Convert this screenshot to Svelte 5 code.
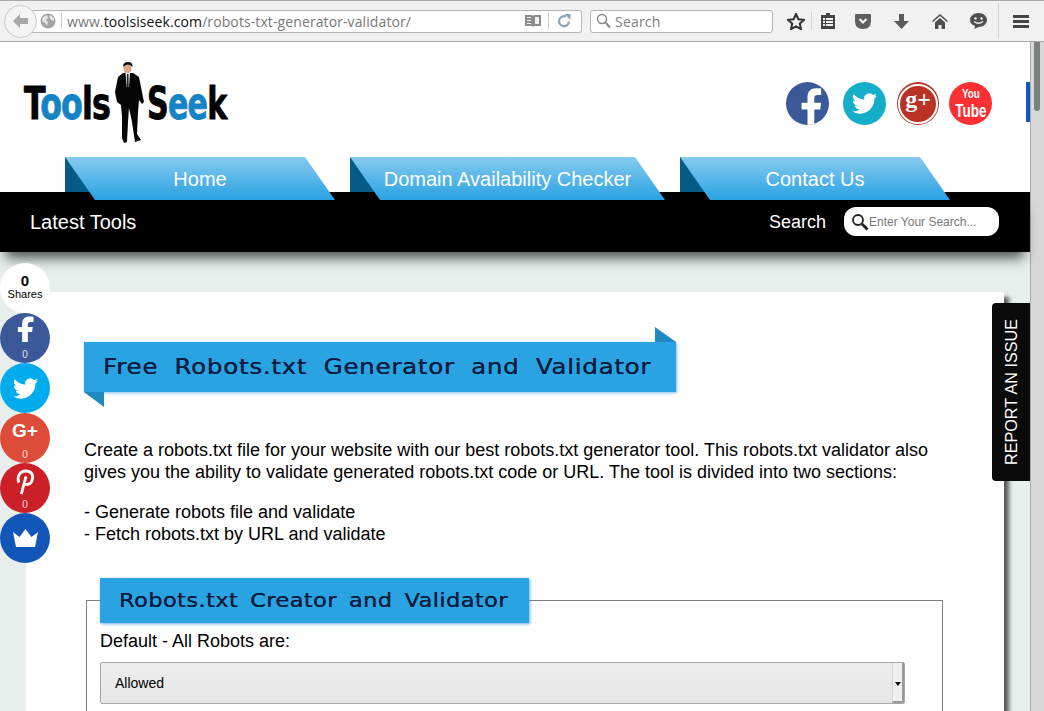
<script>
  const tabs = [
    { label: 'Home', width: 270 },
    { label: 'Domain Availability Checker', width: 315 },
    { label: 'Contact Us', width: 270 }
  ];
  const twitterPath = 'M23.953 4.57a10 10 0 01-2.825.775 4.958 4.958 0 002.163-2.723c-.951.555-2.005.959-3.127 1.184a4.92 4.92 0 00-8.384 4.482C7.69 8.095 4.067 6.13 1.64 3.162a4.822 4.822 0 00-.666 2.475c0 1.71.87 3.213 2.188 4.096a4.904 4.904 0 01-2.228-.616v.06a4.923 4.923 0 003.946 4.827 4.996 4.996 0 01-2.212.085 4.936 4.936 0 004.604 3.417 9.867 9.867 0 01-6.102 2.105c-.39 0-.779-.023-1.17-.067a13.995 13.995 0 007.557 2.209c9.053 0 13.998-7.496 13.998-13.985 0-.21 0-.42-.015-.63A9.935 9.935 0 0024 4.59z';
  const fPath = 'M14 24V13.5h3.5l.5-4h-4V7c0-1.2.3-2 2-2h2V1.2C17.6 1.1 16.4 1 15 1c-3 0-5 1.8-5 5.1v3.4H6.5v4H10V24z';
</script>

<div class="browser">
  <div class="toolbar">
    <div class="back">
      <svg width="20" height="20" viewBox="0 0 20 20"><path d="M2 10l7-7v4h8v6H9v4z" fill="#a8a8a8"/></svg>
    </div>
    <div class="urlbar">
      <svg width="16" height="16" viewBox="0 0 16 16"><circle cx="8" cy="8" r="7.5" fill="#a3a3a3"/><path d="M3 4l4-2 1 3-2 2 2 2-1 4-2-3-3-2zM10 2l4 3v3l-3-1-2-3z" fill="#e4e4e4"/></svg>
      <span class="divider"></span>
      <span class="url">www.<b>toolsiseek.com</b>/robots-txt-generator-validator/</span>
      <svg class="reader" width="16" height="14" viewBox="0 0 16 14"><path d="M0 1h7l1 1 1-1h7v11H9l-1 1-1-1H0z" fill="#8c8c8c"/><path d="M2 3h4v1H2zM2 6h4v1H2zM2 9h4v1H2zM10 3h4v7h-4z" fill="#f2f2f2"/></svg>
      <span class="divider mid"></span>
      <svg class="reload" width="16" height="16" viewBox="0 0 16 16"><path d="M13 8.5A5 5 0 1 1 10 3.6" fill="none" stroke="#8ea2b0" stroke-width="2.2"/><path d="M8.5 1h6v6z" fill="#8ea2b0"/></svg>
    </div>
    <div class="searchbar">
      <svg width="15" height="16" viewBox="0 0 15 16"><circle cx="6" cy="6" r="4.5" fill="none" stroke="#8a8a8a" stroke-width="1.5"/><path d="M9.5 9.5l4.5 5" stroke="#8a8a8a" stroke-width="2"/></svg>
      <span>Search</span>
    </div>
    <div class="tool narrow star">
      <svg width="18" height="17" viewBox="0 0 18 17"><path d="M9 1l2.4 5.2 5.6.6-4.2 3.8 1.2 5.5L9 13.3l-5 2.8 1.2-5.5L1 6.8l5.6-.6z" fill="none" stroke="#2f2f2f" stroke-width="2"/></svg>
    </div>
    <span class="tool-line"></span>
    <div class="tool narrow">
      <svg width="14" height="16" viewBox="0 0 14 16"><path d="M5 0h4v2h5v14H0V2h5z" fill="#444"/><path d="M2 5h2v2H2zM5 5h7v2H5zM2 8h2v2H2zM5 8h7v2H5zM2 11h2v2H2zM5 11h7v2H5z" fill="#f0f0f0"/></svg>
    </div>
    <div class="tool first">
      <svg width="16" height="15" viewBox="0 0 16 15"><path d="M1 0h14q1 0 1 1v6q0 8-8 8T0 7V1q0-1 1-1z" fill="#5e5e5e"/><path d="M4.5 5L8 8.5 11.5 5" fill="none" stroke="#f0f0f0" stroke-width="2.2"/></svg>
    </div>
    <div class="tool">
      <svg width="15" height="15" viewBox="0 0 15 15"><path d="M5 0h5v7h5l-7.5 8L0 7h5z" fill="#5a5a5a"/></svg>
    </div>
    <div class="tool first">
      <svg width="16" height="15" viewBox="0 0 16 15"><path d="M8 0l8 7-1 1-7-6-7 6-1-1zM3 8.5l5-4.5 5 4.5V15H9.5v-4h-3v4H3z" fill="#4f4f4f"/></svg>
    </div>
    <div class="tool">
      <svg width="17" height="16" viewBox="0 0 17 16"><path d="M8.5 0C13 0 17 2.8 17 7s-4 7-8.5 7l-4 2 .5-3C2 12 0 10 0 7c0-4.2 4-7 8.5-7z" fill="#505050"/><circle cx="5.5" cy="5.5" r="1.2" fill="#f0f0f0"/><circle cx="11.5" cy="5.5" r="1.2" fill="#f0f0f0"/><path d="M4 8.5q4.5 3.5 9 0" fill="none" stroke="#f0f0f0" stroke-width="1.3"/></svg>
    </div>
    <span class="tool-line tall"></span>
    <div class="menu"><i></i><i></i><i></i></div>
  </div>

  <div class="viewport">
    <div class="page">
      <header class="top">
        <div class="logo">
          <span class="word">T<em>oo</em>ls</span>
          <svg class="man" width="34" height="82" viewBox="0 0 34 82">
            <path d="M12 11L22 11 28 15 31 30 33 40 31 42 28 38 27 50 26 72 30 78 24 80 21 60 18 46 17 60 16 80 13 81 11 76 11 55 10 43 6 40 4 30 7 15z" fill="#050505"/>
            <ellipse cx="16.5" cy="6.5" rx="4" ry="5" fill="#d9a98c"/>
            <path d="M12 5q0-5 5-5t4.500 5q-2-2.500-4.500-2.500T12 5z" fill="#111"/>
            <path d="M14.5 11h4.500l-1 14h-2.500z" fill="#e8e8e8"/>
            <path d="M16 12h1.400l.3 13h-2z" fill="#222"/>
          </svg>
          <span class="word seek">S<em>ee</em>k</span>
        </div>
        <div class="social">
          <span class="soc fb"><svg width="43" height="43" viewBox="0 0 24 24"><path d={fPath} transform="translate(2.5 2.5) scale(.95)" fill="#fff"/></svg></span>
          <span class="soc tw"><svg width="25" height="25" viewBox="0 0 24 24"><path d={twitterPath} fill="#fff"/></svg></span>
          <span class="soc gp"><span class="ring">g+</span></span>
          <span class="soc yt"><span class="you">You</span><span class="tube">Tube</span></span>
        </div>
        <span class="edge"></span>
      </header>

      <nav class="tabs">
        {#each tabs as tab}
          <a class="tab" href="#top" style:width="{tab.width}px"><span>{tab.label}</span></a>
        {/each}
      </nav>

      <div class="bar">
        <span class="latest">Latest Tools</span>
        <span class="bar-search">Search</span>
        <div class="find">
          <svg width="18" height="18" viewBox="0 0 18 18"><circle cx="7" cy="7" r="5" fill="#fff" stroke="#222" stroke-width="1.8"/><path d="M11 11l5.5 5.5" stroke="#222" stroke-width="2.8"/></svg>
          <span>Enter Your Search...</span>
        </div>
      </div>

      <main class="content">
        <article class="card">
          <div class="banner"><h1><span>Free Robots.txt Generator and Validator</span></h1></div>
          <p class="intro">Create a robots.txt file for your website with our best robots.txt generator tool. This robots.txt validator also gives you the ability to validate generated robots.txt code or URL. The tool is divided into two sections:</p>
          <p class="list">- Generate robots file and validate<br>- Fetch robots.txt by URL and validate</p>
          <fieldset>
            <legend><span>Robots.txt Creator and Validator</span></legend>
            <div class="label">Default - All Robots are:</div>
            <div class="select"><span>Allowed</span><div class="arrow"></div></div>
          </fieldset>
        </article>
      </main>

      <aside class="share">
        <div class="circle count"><b>0</b><span>Shares</span></div>
        <div class="circle s-fb"><svg width="26" height="34" viewBox="5 0 14 24"><path d="M14 19V12h3l.5-3.5H14V7c0-1.2.3-2 2-2h2V1.2C17.6 1.1 16.4 1 15 1c-3 0-5 1.8-5 5.1v2.4H7V12h3v7z" fill="#fff"/></svg><small>0</small></div>
        <div class="circle s-tw"><svg width="25" height="25" viewBox="0 0 24 24"><path d={twitterPath} fill="#fff"/></svg></div>
        <div class="circle s-gp"><strong>G+</strong><small>0</small></div>
        <div class="circle s-pi"><svg width="22" height="30" viewBox="3 1 18 22"><path d="M7 12.5C5 7.5 8 3 12.8 3 17 3 19 6 18 10c-1 4-5 5-6.5 3M12.8 7.5L9 22" fill="none" stroke="#fff" stroke-width="2.3"/></svg><small>0</small></div>
        <div class="circle s-cr"><svg width="25" height="18" viewBox="0 0 25 18"><path d="M0 3l6.5 5L12.5 0l6 8L25 3l-3 15H3z" fill="#fff"/></svg></div>
      </aside>

      <div class="report"><span>REPORT AN ISSUE</span></div>
    </div>
    <div class="scrollbar"><div class="thumb"></div></div>
  </div>
</div>

<style>
  :global(body) {
    overflow: hidden;
  }
  .browser {
    width: 1044px;
    height: 711px;
    overflow: hidden;
    display: flex;
    flex-direction: column;
    font-family: "Liberation Sans", Arial, sans-serif;
    color: #000;
    background: #fff;
  }

  /* browser toolbar */
  .toolbar {
    height: 40px;
    flex: none;
    display: flex;
    align-items: center;
    background: #f1f1f1;
    border-top: 1px solid #a9a9a9;
    border-bottom: 1px solid #a9a9a9;
  }
  .toolbar > * {
    flex: none;
  }
  .back {
    width: 31px;
    height: 31px;
    margin-left: 4px;
    border: 1px solid #c9c9c9;
    border-radius: 50%;
    background: #f4f4f4;
    display: flex;
    align-items: center;
    justify-content: center;
    position: relative;
    z-index: 1;
  }
  .urlbar {
    width: 541px;
    height: 21px;
    margin-left: -7px;
    padding-left: 10px;
    display: flex;
    align-items: center;
    background: #fff;
    border: 1px solid #b4b4b4;
    border-left: none;
    border-radius: 0 3px 3px 0;
    font-family: "Open Sans", sans-serif;
    font-size: 14px;
    color: #777;
  }
  .divider {
    width: 1px;
    height: 16px;
    margin: 0 5px;
    background: #ccc;
  }
  .divider.mid {
    margin: 0 7px;
  }
  .url {
    flex: 1;
    white-space: nowrap;
    letter-spacing: 0.1px;
  }
  .url b {
    font-weight: 400;
    color: #111;
  }
  .reload {
    margin-right: 9px;
  }
  .searchbar {
    width: 176px;
    height: 21px;
    margin-left: 8px;
    padding-left: 5px;
    display: flex;
    align-items: center;
    gap: 4px;
    background: #fff;
    border: 1px solid #b4b4b4;
    border-radius: 3px;
    font-family: "Open Sans", sans-serif;
    font-size: 14px;
    letter-spacing: 0.2px;
    color: #7d7d7d;
  }
  .tool {
    width: 38px;
    display: flex;
    justify-content: center;
  }
  .tool.narrow {
    width: 31px;
  }
  .tool.star {
    margin-left: 7px;
  }
  .tool.first {
    margin-left: 1px;
  }
  .tool-line {
    width: 1px;
    height: 18px;
    background: #d3d3d3;
  }
  .tool-line.tall {
    height: 36px;
    margin-left: 1px;
  }
  .menu {
    width: 44px;
    display: flex;
    flex-direction: column;
    align-items: center;
    gap: 2px;
  }
  .menu i {
    width: 16px;
    height: 3px;
    background: #444;
  }

  .viewport {
    flex: 1;
    display: flex;
    min-height: 0;
  }
  .page {
    width: 1030px;
    flex: none;
    position: relative;
    background: #e8eeec;
  }
  .scrollbar {
    flex: 1;
    background: #d8d8d8;
    border-left: 1px solid #a9a9a9;
  }
  .thumb {
    width: 6px;
    height: 69px;
    margin-left: 3px;
    border-radius: 0 0 3px 3px;
    background: #7d8080;
  }

  /* site header */
  .top {
    height: 115px;
    display: flex;
    background: #fff;
    position: relative;
  }
  .logo {
    margin: 20px 0 0 24px;
    height: 82px;
    display: flex;
    align-items: center;
  }
  .word {
    width: 87px;
    margin-top: 1px;
    font-family: "DejaVu Sans", sans-serif;
    font-stretch: condensed;
    font-weight: 700;
    font-size: 44px;
    letter-spacing: -1px;
    color: #000;
    white-space: nowrap;
    transform: scaleX(0.8);
    transform-origin: left center;
    -webkit-text-stroke: 0.8px currentColor;
  }
  .word.seek {
    width: 80px;
    transform: scaleX(0.76);
  }
  .word em {
    font-style: normal;
    color: #1583c4;
  }
  .man {
    margin-right: 2px;
    flex: none;
  }
  .social {
    margin: 40px 0 0 auto;
    display: flex;
    gap: 11px;
  }
  .soc {
    width: 43px;
    height: 43px;
    border-radius: 50%;
    overflow: hidden;
    display: flex;
    align-items: center;
    justify-content: center;
    color: #fff;
  }
  .fb {
    margin-right: 3px;
    background: #3b5998;
  }
  .tw {
    background: #14aec8;
  }
  .gp {
    width: 42px;
    margin-right: -1px;
    background: #b93224;
  }
  .ring {
    width: 36px;
    height: 36px;
    border: 2px solid #fff;
    border-radius: 50%;
    text-align: center;
    font: 700 24px/27px "Liberation Serif", serif;
  }
  .yt {
    flex-direction: column;
    background: #fb3034;
    font-family: "Liberation Sans", sans-serif;
    font-weight: 700;
  }
  .you {
    font-size: 13px;
    line-height: 15px;
    transform: scaleX(0.75);
  }
  .tube {
    font-size: 18px;
    line-height: 21px;
    transform: scaleX(0.75);
  }
  .edge {
    width: 4px;
    height: 40px;
    margin: 40px 0 0 34px;
    background: #1257b8;
  }

  /* menu tabs, they hang over the black bar */
  .tabs {
    height: 35px;
    padding-left: 65px;
    display: flex;
    gap: 15px;
    background: #fff;
    position: relative;
    z-index: 2;
  }
  .tab {
    height: 43px;
    display: block;
    position: relative;
    color: #fff;
    font-size: 20px;
    line-height: 44px;
    text-align: center;
    text-decoration: none;
  }
  .tab::before {
    content: "";
    position: absolute;
    left: 0;
    top: 0;
    width: 30px;
    height: 35px;
    background: #055a86;
  }
  .tab::after {
    content: "";
    position: absolute;
    inset: 0;
    background: linear-gradient(#87caef, #29a2e2);
    clip-path: polygon(0 0, calc(100% - 30px) 0, 100% 100%, 30px 100%);
  }
  .tab span {
    position: relative;
    z-index: 1;
  }

  .bar {
    height: 60px;
    padding: 0 31px 0 30px;
    display: flex;
    align-items: center;
    background: #000;
    color: #fff;
    box-shadow: 0 12px 12px -6px rgba(20, 30, 30, 0.75);
    position: relative;
    z-index: 1;
  }
  .latest {
    font-size: 20px;
  }
  .bar-search {
    margin-left: auto;
    font-size: 18px;
  }
  .find {
    width: 155px;
    height: 29px;
    margin: 0 0 1px 18px;
    padding-left: 7px;
    box-sizing: border-box;
    display: flex;
    align-items: center;
    background: #fff;
    border-radius: 12px;
    color: #777;
    font-size: 12px;
  }
  .find span {
    margin-top: 1px;
  }

  /* page body */
  .content {
    padding: 40px 26px 0;
    height: 500px;
    box-sizing: border-box;
  }
  .card {
    padding: 50px 58px 0;
    width: 978px;
    height: 600px;
    box-sizing: border-box;
    background: #fff;
    box-shadow: 6px 4px 4px -1px rgba(30, 30, 30, 0.7);
  }
  .banner {
    width: 592px;
    height: 50px;
    position: relative;
    background: #29a3e2;
    box-shadow: 1px 1px 3px rgba(41, 140, 226, 0.6);
  }
  .banner::before {
    content: "";
    position: absolute;
    right: 0;
    top: -15px;
    width: 21px;
    height: 15px;
    background: #2088c3;
    clip-path: polygon(0 0, 100% 100%, 0 100%);
  }
  .banner::after {
    content: "";
    position: absolute;
    left: 0;
    bottom: -15px;
    width: 20px;
    height: 15px;
    background: #2088c3;
    clip-path: polygon(0 0, 100% 0, 100% 100%);
  }
  h1,
  legend {
    font-family: "DejaVu Sans", sans-serif;
    font-weight: 400;
    color: #0b1c3e;
    white-space: nowrap;
  }
  h1 span,
  legend span {
    display: inline-block;
    transform: scaleX(1.12);
    transform-origin: left center;
    text-shadow: 0.3px 0 0 #0b1c3e;
  }
  h1 {
    margin: 0;
    padding-left: 19px;
    font-size: 22px;
    line-height: 50px;
    letter-spacing: 0.6px;
    word-spacing: 7px;
  }
  .intro,
  .list {
    margin: 0;
    font-size: 18px;
    line-height: 22px;
  }
  .intro {
    margin-top: 47px;
    width: 860px;
  }
  .list {
    margin-top: 18px;
  }
  fieldset {
    width: 857px;
    height: 140px;
    box-sizing: border-box;
    margin: 33px 0 0 2px;
    padding: 0 37px 0 13px;
    border: 1px solid #808080;
  }
  legend {
    width: 429px;
    height: 45px;
    padding: 0 19px;
    box-sizing: border-box;
    font-size: 20px;
    line-height: 44px;
    letter-spacing: 0.4px;
    word-spacing: 4px;
    background: #29a3e2;
    box-shadow: 1px 1px 3px rgba(41, 140, 226, 0.7);
  }
  .label {
    margin-top: 7px;
    font-size: 18px;
    line-height: 22px;
  }
  .select {
    height: 42px;
    margin-top: 10px;
    padding-left: 14px;
    box-sizing: border-box;
    display: flex;
    align-items: center;
    justify-content: space-between;
    background: linear-gradient(#ededed, #e6e6e6);
    border: 1px solid #aaa;
    border-radius: 2px;
    font-size: 14px;
  }
  .arrow {
    width: 12px;
    height: 40px;
    position: relative;
    background: #f0f0f0;
    border-left: 1px solid #d5d5d5;
    border-right: 2px solid #9a9a9a;
    border-bottom: 2px solid #9a9a9a;
    box-sizing: border-box;
  }
  .arrow::after {
    content: "";
    position: absolute;
    left: 2px;
    top: 19px;
    border: 3px solid transparent;
    border-top: 4px solid #000;
    border-bottom: none;
  }

  /* floating share buttons */
  .share {
    position: absolute;
    left: 0;
    top: 221px;
    z-index: 3;
    display: flex;
    flex-direction: column;
  }
  .circle {
    width: 50px;
    height: 50px;
    border-radius: 50%;
    overflow: hidden;
    position: relative;
    display: flex;
    align-items: center;
    justify-content: center;
    color: #fff;
  }
  .circle small {
    position: absolute;
    left: 0;
    right: 0;
    bottom: 3px;
    text-align: center;
    font-size: 10px;
    line-height: 11px;
    opacity: 0.85;
  }
  .count {
    flex-direction: column;
    background: #fff;
    color: #000;
    line-height: 13px;
    padding-bottom: 2px;
    box-sizing: border-box;
  }
  .count b {
    font-size: 15px;
    line-height: 15px;
  }
  .count span {
    font-size: 11px;
  }
  .s-fb {
    background: #3b5998;
    align-items: flex-start;
    padding-top: 2px;
    box-sizing: border-box;
  }
  .s-tw {
    background: #00aced;
  }
  .s-gp {
    background: #dd4b39;
    align-items: flex-start;
    padding-top: 7px;
    box-sizing: border-box;
  }
  .s-gp strong {
    font-size: 19px;
    line-height: 22px;
  }
  .s-pi {
    background: #cb2027;
    align-items: flex-start;
    padding-top: 4px;
    box-sizing: border-box;
  }
  .s-cr {
    background: #1257b8;
  }

  .report {
    position: absolute;
    left: 992px;
    top: 261px;
    width: 38px;
    height: 178px;
    z-index: 3;
    display: flex;
    align-items: center;
    justify-content: center;
    background: #0a0a0a;
    border-radius: 4px 0 0 4px;
    color: #fff;
    font-size: 16.2px;
  }
  .report span {
    writing-mode: vertical-rl;
    transform: rotate(180deg);
    white-space: nowrap;
  }
</style>
